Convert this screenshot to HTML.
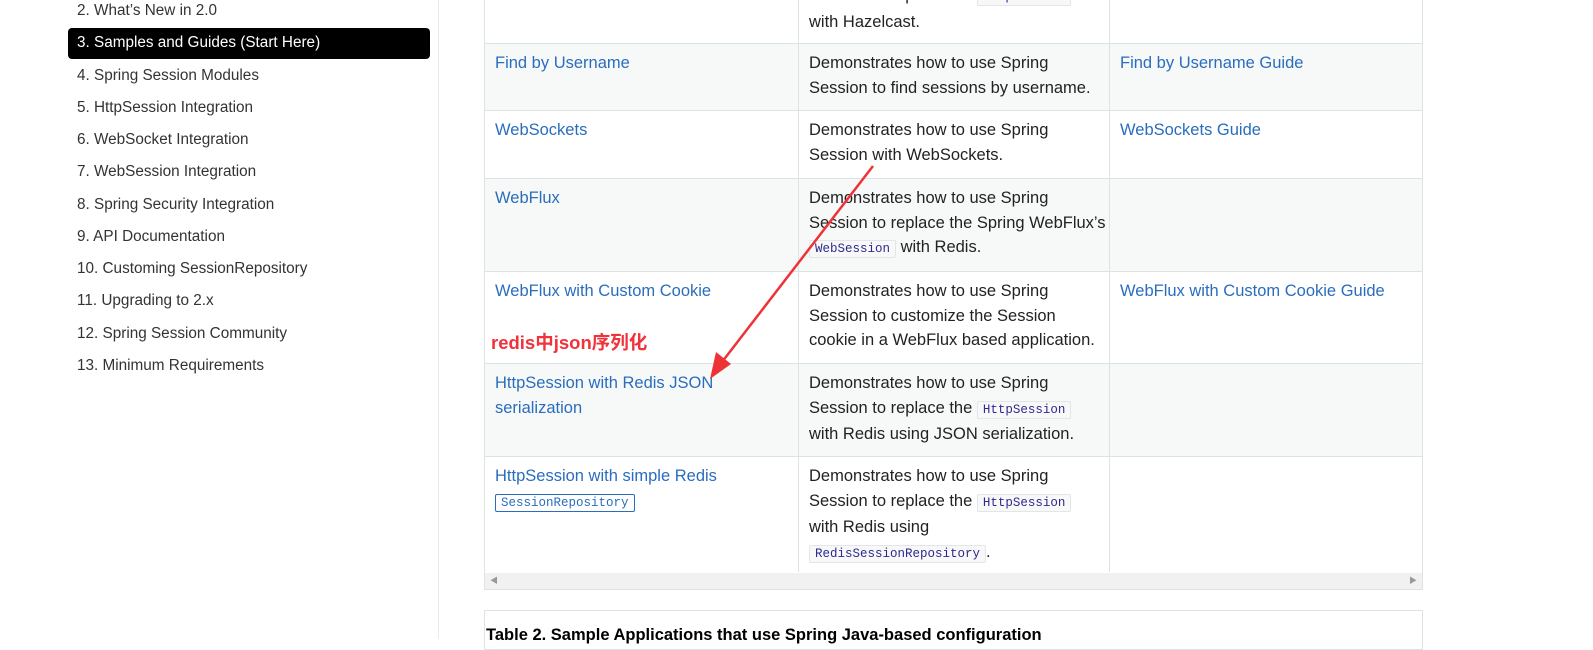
<!DOCTYPE html>
<html><head><meta charset="utf-8"><style>
*{margin:0;padding:0;box-sizing:border-box}
body{width:1593px;height:639px;overflow:hidden;background:#fff;font-family:"Liberation Sans","Noto Sans CJK SC",sans-serif;position:relative}
.nav{position:absolute;left:77px;font-size:15.3px;color:#333;line-height:20px;white-space:nowrap}
.act{position:absolute;left:68px;top:28px;width:362px;height:31px;background:#000;border-radius:4px}
.sb{position:absolute;left:438px;top:0;width:1px;height:639px;background:#e6ecee}
.row{position:absolute;left:484px;width:939px;border-left:1px solid #dbe3e4;border-right:1px solid #dbe3e4;border-top:1px solid #dbe3e4}
.sh{background:#f7f9f9}
.cell{position:absolute;top:0;bottom:0;font-size:16.5px;line-height:24.5px;color:#222;padding-top:7px}
.c1{left:0;width:313px;padding-left:10px}
.c2{left:313px;width:312px;padding-left:10px;border-left:1px solid #dbe3e4;border-right:1px solid #dbe3e4}
.c3{left:625px;width:312px;padding-left:10px}
a{color:#2a6dbd;text-decoration:none}
code{font-family:"Liberation Mono",monospace;font-size:12.5px;color:#2b2b8c;background:#f8f8f9;border:1px solid #e3e6e8;padding:1px 5px;border-radius:2px}
code.b{border:1px solid #2a6dbd;background:#fff;color:#2a6dbd}
</style></head><body>
<div class="act"></div>
<div class="nav" style="top:1px">2. What’s New in 2.0</div>
<div class="nav" style="top:33px;color:#fff">3. Samples and Guides (Start Here)</div>
<div class="nav" style="top:66px">4. Spring Session Modules</div>
<div class="nav" style="top:98px">5. HttpSession Integration</div>
<div class="nav" style="top:130px">6. WebSocket Integration</div>
<div class="nav" style="top:162px">7. WebSession Integration</div>
<div class="nav" style="top:195px">8. Spring Security Integration</div>
<div class="nav" style="top:227px">9. API Documentation</div>
<div class="nav" style="top:259px">10. Customing SessionRepository</div>
<div class="nav" style="top:291px">11. Upgrading to 2.x</div>
<div class="nav" style="top:324px">12. Spring Session Community</div>
<div class="nav" style="top:356px">13. Minimum Requirements</div>
<div class="sb"></div>

<div class="row" style="top:-60px;height:104px"><div class="cell c1"></div><div class="cell c2" style="padding-top:42px">Session to replace the <code>HttpSession</code><br>with Hazelcast.</div><div class="cell c3"></div></div>
<div class="row sh" style="top:43px;height:68px"><div class="cell c1"><a>Find by Username</a></div><div class="cell c2">Demonstrates how to use Spring<br>Session to find sessions by username.</div><div class="cell c3"><a>Find by Username Guide</a></div></div>
<div class="row" style="top:110px;height:69px"><div class="cell c1"><a>WebSockets</a></div><div class="cell c2">Demonstrates how to use Spring<br>Session with WebSockets.</div><div class="cell c3"><a>WebSockets Guide</a></div></div>
<div class="row sh" style="top:178px;height:94px"><div class="cell c1"><a>WebFlux</a></div><div class="cell c2">Demonstrates how to use Spring<br>Session to replace the Spring WebFlux’s<br><code>WebSession</code> with Redis.</div><div class="cell c3"></div></div>
<div class="row" style="top:271px;height:93px"><div class="cell c1"><a>WebFlux with Custom Cookie</a></div><div class="cell c2">Demonstrates how to use Spring<br>Session to customize the Session<br>cookie in a WebFlux based application.</div><div class="cell c3"><a>WebFlux with Custom Cookie Guide</a></div></div>
<div class="row sh" style="top:363px;height:94px"><div class="cell c1"><a>HttpSession with Redis JSON<br>serialization</a></div><div class="cell c2">Demonstrates how to use Spring<br>Session to replace the <code>HttpSession</code><br>with Redis using JSON serialization.</div><div class="cell c3"></div></div>
<div class="row" style="top:456px;height:134px;background:#fff;border-bottom:1px solid #dbe3e4"><div class="cell c1" style="bottom:17px"><a>HttpSession with simple Redis</a><br><code class="b">SessionRepository</code></div><div class="cell c2" style="bottom:17px">Demonstrates how to use Spring<br>Session to replace the <code>HttpSession</code><br>with Redis using<br><code>RedisSessionRepository</code>.</div><div class="cell c3" style="bottom:17px"></div>
<div style="position:absolute;left:0;right:0;bottom:0;height:16px;background:#f1f1f1;font-size:8px;color:#999;line-height:16px"><span style="position:absolute;left:5px">◀</span><span style="position:absolute;right:5px">▶</span></div></div>

<div style="position:absolute;left:484px;top:610px;width:939px;height:40px;border:1px solid #dbe3e4"></div>
<div style="position:absolute;left:486px;top:626px;font-size:16.5px;font-weight:bold;color:#000;white-space:nowrap">Table 2. Sample Applications that use Spring Java-based configuration</div>

<div style="position:absolute;left:491px;top:329px;font-size:18.5px;font-weight:bold;color:#f0323a;white-space:nowrap">redis中json序列化</div>
<svg style="position:absolute;left:0;top:0" width="1593" height="639">
<line x1="873" y1="166" x2="722" y2="362" stroke="#ee3338" stroke-width="2.5"/>
<polygon points="710,379 716,352 731,364" fill="#ee3338"/>
</svg>
</body></html>
